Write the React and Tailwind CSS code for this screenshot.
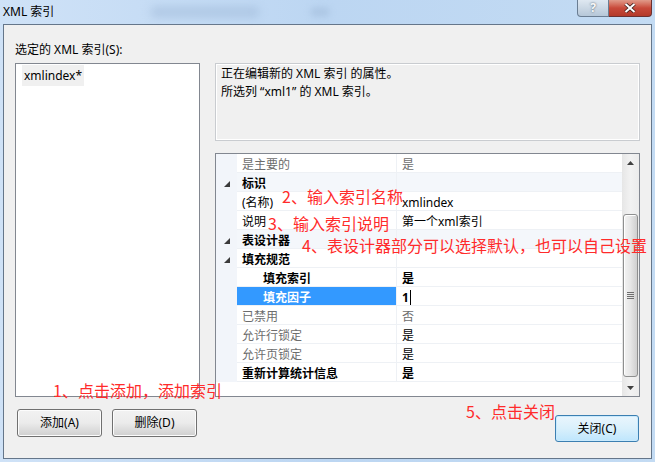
import React from 'react';

const rows = [
	{ name: '是主要的', value: '是', muted: true, mutedValue: true },
	{ name: '标识', cat: true },
	{ name: '(名称)', value: 'xmlindex' },
	{ name: '说明', value: '第一个xml索引' },
	{ name: '表设计器', cat: true },
	{ name: '填充规范', cat: true, plain: true },
	{ name: '填充索引', value: '是', child: true, bold: true },
	{ name: '填充因子', value: '1', child: true, bold: true, selected: true },
	{ name: '已禁用', value: '否', muted: true, mutedValue: true },
	{ name: '允许行锁定', value: '是', muted: true },
	{ name: '允许页锁定', value: '是', muted: true },
	{ name: '重新计算统计信息', value: '是', bold: true },
];

function Caret() {
	return (
		<svg width="6" height="6" viewBox="0 0 6 6">
			<polygon points="0,6 6,6 6,0" fill="#3b3b3b" />
		</svg>
	);
}

function PropRow({ row }) {
	const tint = row.cat && !row.plain ? 'bg-[#f4f7fb]' : 'bg-white';
	return (
		<div className="flex h-[19px]">
			<div className="w-[21px] bg-[#f2f5fa] flex items-center justify-center pt-[2px]">
				{row.cat && <Caret />}
			</div>
			<div
				className={`w-[160px] flex items-center pt-[3px] border-b border-r border-[#eef1f5] ${
					row.selected ? 'bg-[#3399ff] text-white' : tint
				} ${row.child ? 'pl-[26px]' : 'pl-[5px]'} ${
					row.muted ? 'text-[#6d6d6d]' : row.selected ? '' : 'text-black'
				} ${row.cat || row.bold ? 'font-bold' : ''}`}
			>
				{row.name}
			</div>
			<div
				className={`flex-1 flex items-center pt-[3px] pl-[5px] border-b border-[#eef1f5] ${tint} ${
					row.mutedValue ? 'text-[#6d6d6d]' : 'text-black'
				} ${row.bold ? 'font-bold' : ''}`}
			>
				{row.value}
				{row.selected && <span className="ml-[1px] w-[1px] h-[15px] bg-black" />}
			</div>
		</div>
	);
}

function ScrollBar() {
	return (
		<div className="w-[17px] h-full flex flex-col bg-gradient-to-r from-[#e6e6e6] via-[#f2f2f2] to-[#ececec]">
			<div className="h-[17px] flex items-center justify-center">
				<svg width="7" height="4" viewBox="0 0 7 4">
					<polygon points="0,4 7,4 3.5,0" fill="#404040" />
				</svg>
			</div>
			<div className="h-[43px]" />
			<div className="mx-[1px] h-[163px] rounded-[3px] border border-[#8e8f8f] bg-gradient-to-r from-[#f3f3f3] via-[#e6e6e6] to-[#cfcfcf] flex items-center justify-center shadow-[inset_1px_1px_0_#ffffff]">
				<div className="flex flex-col gap-[1px]">
					<div className="w-[7px] h-[1px] bg-[#6f6f6f]" />
					<div className="w-[7px] h-[1px] bg-[#6f6f6f]" />
					<div className="w-[7px] h-[1px] bg-[#6f6f6f]" />
					<div className="w-[7px] h-[1px] bg-[#6f6f6f]" />
				</div>
			</div>
			<div className="flex-1 flex items-end justify-center pb-[6px]">
				<svg width="7" height="4" viewBox="0 0 7 4">
					<polygon points="0,0 7,0 3.5,4" fill="#404040" />
				</svg>
			</div>
		</div>
	);
}

function Button({ label, primary, className = '' }) {
	return (
		<div
			className={`flex items-center justify-center rounded-[3px] border text-black ${
				primary
					? 'border-[#3c7fb1] bg-gradient-to-b from-[#eaf6fd] via-[#d9f0fc] to-[#bee6fd] shadow-[inset_0_0_0_1px_#c9eafd]'
					: 'border-[#707070] bg-gradient-to-b from-[#f2f2f2] via-[#ebebeb] to-[#cfcfcf] shadow-[inset_0_0_0_1px_#fcfcfc]'
			} ${className}`}
		>
			{label}
		</div>
	);
}

export default function App() {
	return (
		<div className="w-[655px] h-[462px] relative overflow-hidden bg-gradient-to-r from-[#cfe2f7] via-[#bcd6f2] to-[#c3dbf3] font-['Segoe_UI','Noto_Sans','Noto_Sans_CJK_SC',sans-serif] text-[12px] leading-[16px]">
			{/* title bar */}
			<div className="h-[24px] relative flex items-center pl-[3px] text-black">
				<div className="absolute left-[150px] top-[6px] w-[110px] h-[12px] rounded-full bg-[#9fb9d8] opacity-50 blur-[4px]" />
				<div className="absolute left-[310px] top-[7px] w-[20px] h-[10px] rounded-full bg-[#9fb9d8] opacity-50 blur-[3px]" />
				<span className="relative">XML 索引</span>
				<div className="absolute top-0 left-[577px] flex">
					<div className="w-[32px] h-[17px] rounded-bl-[4px] border border-t-0 border-[#6a7d92] bg-gradient-to-b from-[#dfe8f1] to-[#b6c7d8] flex items-center justify-center text-[#f8f8f8] font-bold text-[12px] leading-none [text-shadow:0_0_2px_#3f5060]">
						?
					</div>
					<div className="w-[43px] h-[17px] rounded-br-[4px] border border-l-0 border-t-0 border-[#6b3030] bg-gradient-to-b from-[#e09a8a] via-[#c8493a] to-[#b33a2a] flex items-center justify-center">
						<svg width="12" height="10" viewBox="0 0 12 10">
							<path d="M1.5 1 L10.5 9 M10.5 1 L1.5 9" stroke="#3d1e1a" strokeWidth="3.6" />
							<path d="M1.5 1 L10.5 9 M10.5 1 L1.5 9" stroke="#ffffff" strokeWidth="2" />
						</svg>
					</div>
				</div>
			</div>

			{/* client area */}
			<div className="mx-[3px] h-[435px] border border-[#65768a] bg-[#f0f0f0] pl-[11px] pr-[11px] pt-[17px] text-black">
				<div className="h-[16px]">选定的 XML 索引(S):</div>
				<div className="mt-[5px] flex gap-[15px]">
					<div className="w-[185px] h-[334px] border border-[#828790] bg-white p-[1px] pl-[6px]">
						<div className="inline-block bg-[#f0f0f0] px-[2px] h-[21px] leading-[21px]">xmlindex*</div>
					</div>
					<div className="w-[425px] flex flex-col">
						<div className="h-[78px] border border-[#c9ccd0] bg-[#f0f0f0] shadow-[inset_0_0_0_1px_#ffffff] pl-[5px] pt-[1px] leading-[18px]">
							<div>正在编辑新的 XML 索引 的属性。</div>
							<div>所选列 “xml1” 的 XML 索引。</div>
						</div>
						<div className="mt-[12px] h-[244px] border border-[#828790] bg-white flex">
							<div className="flex-1 flex flex-col">
								{rows.map(r => (
									<PropRow key={r.name} row={r} />
								))}
							</div>
							<ScrollBar />
						</div>
					</div>
				</div>
				<div className="flex items-start mt-[12px]">
					<Button label="添加(A)" className="ml-[2px] w-[85px] h-[28px]" />
					<Button label="删除(D)" className="ml-[10px] w-[85px] h-[28px]" />
					<Button label="关闭(C)" primary className="ml-auto mr-[1px] mt-[6px] w-[84px] h-[27px]" />
				</div>
			</div>

			{/* red annotations */}
			<div className="font-['Noto_Sans_CJK_SC',sans-serif] text-[16px] leading-[20px] text-[#ff2b2b]">
				<span className="absolute left-[282px] top-[186px]">2、输入索引名称</span>
				<span className="absolute left-[268px] top-[213px]">3、输入索引说明</span>
				<span className="absolute left-[302px] top-[235px]">4、表设计器部分可以选择默认，也可以自己设置</span>
				<span className="absolute left-[53px] top-[380px]">1、点击添加，添加索引</span>
				<span className="absolute left-[466px] top-[401px]">5、点击关闭</span>
			</div>
		</div>
	);
}
